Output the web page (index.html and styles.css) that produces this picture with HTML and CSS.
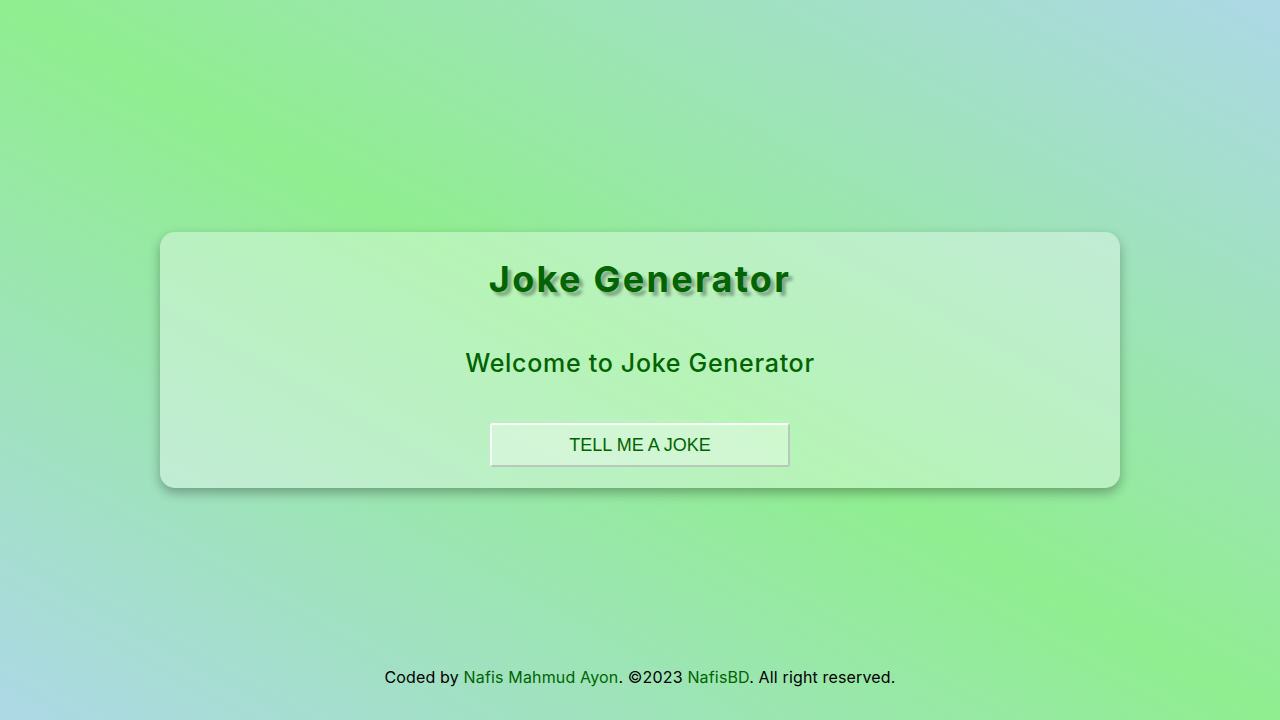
FILE: index.html
```html
<!DOCTYPE html>
<html lang="en">
<head>
<meta charset="UTF-8">
<title>Joke Generator</title>
<link rel="stylesheet" href="styles.css">
</head>
<body>
  <div class="spacer"></div>
  <main class="card">
    <h1 class="title">Joke Generator</h1>
    <p class="joke">Welcome to Joke Generator</p>
    <button class="btn" type="button">TELL ME A JOKE</button>
  </main>
  <footer class="footer">
    Coded by <a class="link" href="#">Nafis Mahmud Ayon</a>. ©2023 <a class="link" href="#">NafisBD</a>. All right reserved.
  </footer>
</body>
</html>
```
FILE: styles.css
```css
html, body {
  margin: 0;
  padding: 0;
}
body {
  width: 1280px;
  height: 720px;
  overflow: hidden;
  display: grid;
  grid-template-rows: 1fr auto 1fr;
  justify-items: center;
  font-family: Inter, "Open Sans", sans-serif;
  background: linear-gradient(to top right, #add8e6 0%, #90ee90 50%, #add8e6 100%);
}
.card {
  box-sizing: border-box;
  width: 960px;
  height: 256px;
  padding: 24px 20px 21px;
  border-radius: 15px;
  background: rgba(255, 255, 255, 0.35);
  box-shadow: 0 5px 12px rgba(0, 0, 0, 0.3);
  display: flex;
  flex-direction: column;
  align-items: center;
}
.title {
  margin: 0;
  font-size: 36px;
  line-height: 46px;
  font-weight: 700;
  letter-spacing: 2.3px;
  color: #006400;
  text-shadow: 4px 4px 3px rgba(0, 0, 0, 0.3);
}
.joke {
  margin: 44px 0 0;
  font-size: 25px;
  line-height: 34px;
  font-weight: 500;
  letter-spacing: 0.7px;
  color: #006400;
}
.btn {
  box-sizing: border-box;
  margin-top: 43px;
  width: 300px;
  height: 45px;
  font-family: "Liberation Sans", Arial, sans-serif;
  font-size: 18px;
  color: #006400;
  background: rgba(255, 255, 255, 0.35);
  border: 2px solid;
  border-color: rgba(255, 255, 255, 0.8) #b9c9b9 #b9c9b9 rgba(255, 255, 255, 0.8);
  border-radius: 3px;
  cursor: pointer;
}
.footer {
  align-self: end;
  margin-bottom: 31px;
  font-size: 16px;
  line-height: 24px;
  letter-spacing: 0.16px;
  color: #000;
}
.link {
  color: #006400;
  text-decoration: none;
}
```
